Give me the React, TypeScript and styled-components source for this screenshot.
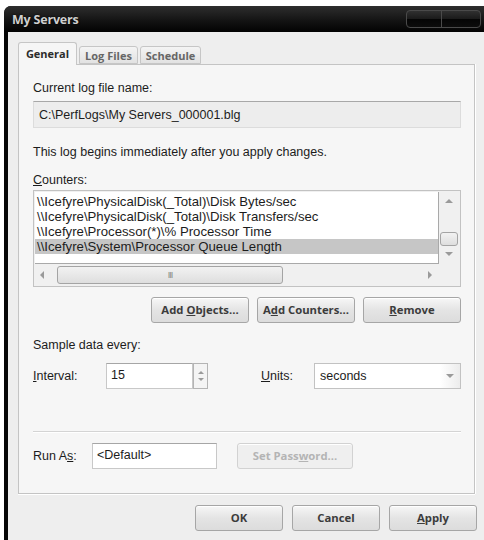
import styled, { createGlobalStyle } from "styled-components";

const GlobalStyle = createGlobalStyle`
  html, body {
    margin: 0;
    padding: 0;
    background: #ffffff;
    overflow: hidden;
  }
  body {
    font-family: "Liberation Sans", Arial, sans-serif;
    font-size: 12.5px;
    color: #1c1c1c;
  }
`;

const Window = styled.div`
  margin: 6px 0 0 4px;
  width: 486px;
  height: 540px;
  background: #050505;
  border-radius: 7px 7px 0 0;
  display: flex;
  flex-direction: column;
  overflow: hidden;
`;

const TitleBar = styled.div`
  height: 26px;
  flex: none;
  display: flex;
  align-items: center;
  justify-content: space-between;
  padding: 0 9px 0 8px;
  background: linear-gradient(#2e2e2e, #141414 55%, #020202);
`;

const Title = styled.span`
  font-family: "Open Sans", "Liberation Sans", sans-serif;
  font-weight: 700;
  font-size: 12.5px;
  letter-spacing: -0.2px;
  color: #cfcfcf;
  text-shadow: 0 0 2px #000;
`;

const CaptionGroup = styled.div`
  display: flex;
  margin-top: -1px;
  border: 1px solid #4a4a4a;
  border-radius: 4px;
  overflow: hidden;
  background: linear-gradient(#303030, #1a1a1a 50%, #050505 51%, #0c0c0c);
`;

const CaptionButton = styled.div<{ $w: number }>`
  width: ${(p) => p.$w}px;
  height: 16px;
  & + & {
    border-left: 1px solid #4a4a4a;
  }
`;

const Body = styled.div`
  flex: 1;
  margin-left: 4px;
  background: #eeeeee;
  padding: 10px 13px 0 10px;
  display: flex;
  flex-direction: column;
`;

const TabRow = styled.div`
  display: flex;
  align-items: flex-end;
  height: 22px;
  gap: 2px;
  position: relative;
  z-index: 1;
`;

const Tab = styled.div<{ $active?: boolean; $w: number }>`
  box-sizing: border-box;
  width: ${(p) => p.$w}px;
  height: ${(p) => (p.$active ? 23 : 18)}px;
  margin-bottom: ${(p) => (p.$active ? -1 : 0)}px;
  display: flex;
  align-items: center;
  justify-content: center;
  border: 1px solid #c6c6c6;
  border-bottom: ${(p) => (p.$active ? "none" : "1px solid #c6c6c6")};
  border-radius: 3px 3px 0 0;
  background: ${(p) =>
    p.$active ? "#f6f6f6" : "linear-gradient(#f4f4f4, #e2e2e2)"};
  font-family: "Open Sans", "Liberation Sans", sans-serif;
  font-weight: 700;
  font-size: 11px;
  color: ${(p) => (p.$active ? "#2c2c2c" : "#666666")};
  padding-bottom: ${(p) => (p.$active ? 2 : 0)}px;
`;

const Panel = styled.div`
  width: 457px;
  box-sizing: border-box;
  border: 1px solid #c4c4c4;
  background: #f6f6f6;
  box-shadow: 0 1px 0 #ffffff, 1px 0 0 #ffffff;
  padding: 15px 13px 24px 14px;
  display: flex;
  flex-direction: column;
`;

const Label = styled.div<{ $gap?: number }>`
  line-height: 16px;
  margin-top: ${(p) => p.$gap ?? 0}px;
`;

const ReadOnlyField = styled.div`
  margin-top: 5px;
  height: 27px;
  box-sizing: border-box;
  border: 1px solid #dcdcdc;
  border-top-color: #a8a8a8;
  background: #ededed;
  padding: 0 5px;
  display: flex;
  align-items: center;
`;

const ListBox = styled.div`
  margin-top: 2px;
  height: 97px;
  box-sizing: border-box;
  border: 1px solid #c2c2c2;
  padding: 1px;
  background: #f0f0f0;
  display: grid;
  grid-template-columns: 1fr 20px;
  grid-template-rows: 1fr 21px;
`;

const ListArea = styled.div`
  background: #ffffff;
  border-right: 1px solid #a9a9a9;
  border-bottom: 1px solid #a9a9a9;
  padding-top: 2px;
  overflow: hidden;
`;

const ListRow = styled.div<{ $selected?: boolean }>`
  height: 15px;
  line-height: 15px;
  padding-left: 2px;
  font-size: 13.2px;
  white-space: nowrap;
  background: ${(p) => (p.$selected ? "#c6c6c6" : "transparent")};
`;

const ScrollV = styled.div`
  display: flex;
  flex-direction: column;
  align-items: center;
`;

const ScrollH = styled.div`
  grid-column: 1 / 3;
  display: flex;
  align-items: center;
  padding: 0 0 0 5px;
`;

const Arrow = styled.span<{ $dir: "up" | "down" | "left" | "right"; $size?: number }>`
  width: 0;
  height: 0;
  flex: none;
  border: ${(p) => p.$size ?? 4}px solid transparent;
  ${(p) =>
    p.$dir === "up"
      ? `border-bottom-color: #9a9a9a; border-top-width: 0;`
      : p.$dir === "down"
      ? `border-top-color: #9a9a9a; border-bottom-width: 0;`
      : p.$dir === "left"
      ? `border-right-color: #9a9a9a; border-left-width: 0;`
      : `border-left-color: #9a9a9a; border-right-width: 0;`}
`;

const Thumb = styled.div<{ $w: number; $h: number }>`
  width: ${(p) => p.$w}px;
  height: ${(p) => p.$h}px;
  box-sizing: border-box;
  border: 1px solid #a4a4a4;
  border-radius: 3px;
  background: linear-gradient(#f2f2f2, #dedede);
  display: flex;
  align-items: center;
  justify-content: center;
  font-size: 9px;
  color: #888;
  letter-spacing: -1px;
`;

const Spacer = styled.div<{ $h?: number; $w?: number }>`
  flex: none;
  height: ${(p) => p.$h ?? 0}px;
  width: ${(p) => p.$w ?? 0}px;
`;

const ButtonRow = styled.div<{ $gap: number; $top: number }>`
  margin-top: ${(p) => p.$top}px;
  display: flex;
  justify-content: flex-end;
  gap: ${(p) => p.$gap}px;
`;

const Button = styled.div<{ $w: number; $disabled?: boolean }>`
  width: ${(p) => p.$w}px;
  height: 26px;
  box-sizing: border-box;
  display: flex;
  align-items: center;
  justify-content: center;
  padding-bottom: 1px;
  border: 1px solid ${(p) => (p.$disabled ? "#d2d2d2" : "#a6a6a6")};
  border-radius: 3px;
  background: ${(p) =>
    p.$disabled ? "#efefef" : "linear-gradient(#f7f7f7, #e4e4e4 50%, #dcdcdc)"};
  box-shadow: inset 0 1px 0 #ffffff;
  font-family: "Open Sans", "Liberation Sans", sans-serif;
  font-weight: 700;
  font-size: 11.3px;
  color: ${(p) => (p.$disabled ? "#b4b4b4" : "#3c3c3c")};
`;

const FieldRow = styled.div<{ $top: number }>`
  margin-top: ${(p) => p.$top}px;
  height: 26px;
  display: flex;
  align-items: center;
`;

const RowLabel = styled.div<{ $w: number; $lead?: number }>`
  width: ${(p) => p.$w}px;
  margin-left: ${(p) => p.$lead ?? 0}px;
  flex: none;
`;

const TextBox = styled.div<{ $w: number }>`
  width: ${(p) => p.$w}px;
  height: 26px;
  box-sizing: border-box;
  border: 1px solid #c8c8c8;
  border-top-color: #a6a6a6;
  background: #ffffff;
  padding: 0 0 2px 4px;
  display: flex;
  align-items: center;
  flex: none;
`;

const SpinButtons = styled.div`
  width: 16px;
  height: 26px;
  box-sizing: border-box;
  border: 1px solid #b4b4b4;
  background: #f4f4f4;
  display: flex;
  flex-direction: column;
  align-items: center;
  justify-content: center;
  gap: 4px;
`;

const Select = styled.div`
  width: 147px;
  height: 26px;
  box-sizing: border-box;
  border: 1px solid #c2c2c2;
  background: #ffffff;
  display: flex;
  align-items: center;
  padding-left: 5px;
  flex: none;
`;

const SelectValue = styled.span`
  flex: 1;
`;

const DropButton = styled.div`
  width: 20px;
  align-self: stretch;
  background: linear-gradient(90deg, #ffffff, #ececec);
  display: flex;
  align-items: center;
  justify-content: center;
`;

const Separator = styled.div`
  margin-top: 42px;
  height: 1px;
  background: #d4d4d4;
  box-shadow: 0 1px 0 #ffffff;
`;

const counters = [
  "\\\\Icefyre\\PhysicalDisk(_Total)\\Disk Bytes/sec",
  "\\\\Icefyre\\PhysicalDisk(_Total)\\Disk Transfers/sec",
  "\\\\Icefyre\\Processor(*)\\% Processor Time",
  "\\\\Icefyre\\System\\Processor Queue Length",
];

export default function App() {
  return (
    <>
      <GlobalStyle />
      <Window>
        <TitleBar>
          <Title>My Servers</Title>
          <CaptionGroup>
            <CaptionButton $w={34} />
            <CaptionButton $w={38} />
          </CaptionGroup>
        </TitleBar>
        <Body>
          <TabRow>
            <Tab $active $w={59}>General</Tab>
            <Tab $w={59}>Log Files</Tab>
            <Tab $w={61}>Schedule</Tab>
          </TabRow>
          <Panel>
            <Label>Current log file name:</Label>
            <ReadOnlyField>C:\PerfLogs\My Servers_000001.blg</ReadOnlyField>
            <Label $gap={16}>This log begins immediately after you apply changes.</Label>
            <Label $gap={12}>
              <u>C</u>ounters:
            </Label>
            <ListBox>
              <ListArea>
                {counters.map((c, i) => (
                  <ListRow key={c} $selected={i === counters.length - 1}>
                    {c}
                  </ListRow>
                ))}
              </ListArea>
              <ScrollV>
                <Spacer $h={7} />
                <Arrow $dir="up" />
                <Spacer $h={29} />
                <Thumb $w={18} $h={14} />
                <Spacer $h={6} />
                <Arrow $dir="down" />
              </ScrollV>
              <ScrollH>
                <Arrow $dir="left" />
                <Spacer $w={13} />
                <Thumb $w={226} $h={18}>III</Thumb>
                <Spacer $w={145} />
                <Arrow $dir="right" />
              </ScrollH>
            </ListBox>
            <ButtonRow $gap={8} $top={10}>
              <Button $w={98}>
                Add&nbsp;<u>O</u>bjects...
              </Button>
              <Button $w={98}>
                A<u>d</u>d Counters...
              </Button>
              <Button $w={98}>
                <u>R</u>emove
              </Button>
            </ButtonRow>
            <Label $gap={14}>Sample data every:</Label>
            <FieldRow $top={10}>
              <RowLabel $w={73}>
                <u>I</u>nterval:
              </RowLabel>
              <TextBox $w={87}>15</TextBox>
              <SpinButtons>
                <Arrow $dir="up" $size={3} />
                <Arrow $dir="down" $size={3} />
              </SpinButtons>
              <RowLabel $w={53} $lead={53}>
                <u>U</u>nits:
              </RowLabel>
              <Select>
                <SelectValue>seconds</SelectValue>
                <DropButton>
                  <Arrow $dir="down" />
                </DropButton>
              </Select>
            </FieldRow>
            <Separator />
            <FieldRow $top={11}>
              <RowLabel $w={59}>
                Run A<u>s</u>:
              </RowLabel>
              <TextBox $w={125}>&lt;Default&gt;</TextBox>
              <Spacer $w={20} />
              <Button $w={116} $disabled>
                Set Pass<u>w</u>ord...
              </Button>
            </FieldRow>
          </Panel>
          <ButtonRow $gap={9} $top={11}>
            <Button $w={88}>OK</Button>
            <Button $w={88}>Cancel</Button>
            <Button $w={88}>
              <u>A</u>pply
            </Button>
          </ButtonRow>
        </Body>
      </Window>
    </>
  );
}
